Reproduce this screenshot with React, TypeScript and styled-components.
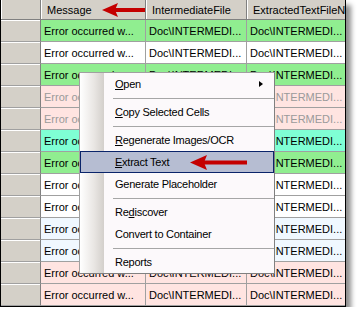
import React from "react";
import styled, { createGlobalStyle } from "styled-components";

const GlobalStyle = createGlobalStyle`
  html, body {
    margin: 0;
    padding: 0;
    background: #fff;
  }
  body {
    font-family: "Liberation Sans", Arial, sans-serif;
    font-size: 11px;
    color: #000;
  }
`;

const Frame = styled.div`
  position: relative;
  width: 344px;
  border-left: 1px solid #000;
  border-right: 1px solid #000;
  border-bottom: 1px solid #000;
  box-shadow: 5px 5px 5px rgba(0, 0, 0, 0.45);
  background: #fff;
`;

const Grid = styled.div`
  display: grid;
  grid-template-columns: 40px 105px 101px 98px;
  grid-template-rows: 20px;
  grid-auto-rows: 22px;
`;

const HeaderCell = styled.div<{ $last?: boolean }>`
  box-sizing: border-box;
  background: #d4d0c8;
  border-right: ${(p) => (p.$last ? "none" : "1px solid #808080")};
  border-bottom: 1px solid #808080;
  box-shadow: inset 1px 0 0 #fff;
  padding-left: 6px;
  display: flex;
  align-items: center;
  white-space: nowrap;
  overflow: hidden;
`;

const RowHeader = styled.div`
  box-sizing: border-box;
  background: #d4d0c8;
  border-right: 1px solid #808080;
  border-bottom: 1px solid #a0a0a0;
  box-shadow: inset 0 1px 0 #fff;
`;

const Cell = styled.div<{ $bg: string; $dim?: boolean; $last?: boolean }>`
  box-sizing: border-box;
  background: ${(p) => p.$bg};
  color: ${(p) => (p.$dim ? "#9a9a9a" : "#000")};
  border-right: ${(p) => (p.$last ? "none" : "1px solid #a0a0a0")};
  border-bottom: 1px solid #a0a0a0;
  padding-left: 3px;
  display: flex;
  align-items: center;
  white-space: nowrap;
  overflow: hidden;
`;

const Menu = styled.div`
  position: absolute;
  left: 78px;
  top: 72px;
  width: 194px;
  border: 1px solid #a0a0a0;
  border-right-color: #808080;
  border-bottom-color: #808080;
  letter-spacing: -0.25px;
  background: linear-gradient(to right, #ffffff 0, #e9e6e3 14px, #d3cfcb 24px, #fcf9fb 24px);
`;

const MenuItem = styled.div<{ $active?: boolean }>`
  position: relative;
  height: 22px;
  padding-left: 35px;
  display: flex;
  align-items: center;
  white-space: nowrap;
  background: ${(p) => (p.$active ? "#b6bdd2" : "transparent")};
  box-shadow: ${(p) => (p.$active ? "inset 0 0 0 1px #0a246a" : "none")};
`;

const Separator = styled.div`
  height: 6px;
  display: flex;
  align-items: center;
  padding-left: 33px;
  &::after {
    content: "";
    flex: 1;
    height: 1px;
    background: #a6a6a6;
  }
`;

const SubArrow = styled.span`
  position: absolute;
  right: 11px;
  top: 8px;
  width: 0;
  height: 0;
  border-left: 4px solid #000;
  border-top: 3.5px solid transparent;
  border-bottom: 3.5px solid transparent;
`;

const Pointer = styled.svg<{ $left: number; $top: number }>`
  position: absolute;
  left: ${(p) => p.$left}px;
  top: ${(p) => p.$top}px;
  pointer-events: none;
`;

type Row = { bg: string; dim?: boolean };

const rows: Row[] = [
  { bg: "#90ee90" },
  { bg: "#ffffff" },
  { bg: "#90ee90" },
  { bg: "#ffe4e1", dim: true },
  { bg: "#ffe4e1", dim: true },
  { bg: "#7fffd4" },
  { bg: "#90ee90" },
  { bg: "#ffffff" },
  { bg: "#ffffff" },
  { bg: "#f0f8ff" },
  { bg: "#f0f8ff" },
  { bg: "#ffe4e1" },
  { bg: "#ffe4e1" },
];

function RedArrow({ left, top, length, head }: { left: number; top: number; length: number; head: number }) {
  const h = head;
  return (
    <Pointer $left={left} $top={top} width={length} height={h} viewBox={`0 0 ${length} ${h}`}>
      <polygon points={`0,${h / 2} ${h + 2},0 ${h - 1},${h / 2} ${h + 2},${h}`} fill="#c40000" />
      <rect x={h - 2} y={h / 2 - 2} width={length - h + 2} height={4} fill="#c40000" />
    </Pointer>
  );
}

export default function App() {
  return (
    <>
      <GlobalStyle />
      <Frame>
        <Grid>
          <HeaderCell />
          <HeaderCell>Message</HeaderCell>
          <HeaderCell>IntermediateFile</HeaderCell>
          <HeaderCell $last>ExtractedTextFileName</HeaderCell>
          {rows.map((r, i) => (
            <React.Fragment key={i}>
              <RowHeader />
              <Cell $bg={r.bg} $dim={r.dim}>Error occurred w...</Cell>
              <Cell $bg={r.bg} $dim={r.dim}>Doc\INTERMEDI...</Cell>
              <Cell $bg={r.bg} $dim={r.dim} $last>Doc\INTERMEDI...</Cell>
            </React.Fragment>
          ))}
        </Grid>

        <RedArrow left={101} top={3} length={43} head={14} />

        <Menu>
          <MenuItem>
            <span><u>O</u>pen</span>
            <SubArrow />
          </MenuItem>
          <Separator />
          <MenuItem><span><u>C</u>opy Selected Cells</span></MenuItem>
          <Separator />
          <MenuItem><span><u>R</u>egenerate Images/OCR</span></MenuItem>
          <MenuItem $active><span><u>E</u>xtract Text</span></MenuItem>
          <MenuItem>Generate Placeholder</MenuItem>
          <Separator />
          <MenuItem><span>Re<u>d</u>iscover</span></MenuItem>
          <MenuItem>Convert to Container</MenuItem>
          <Separator />
          <MenuItem>Reports</MenuItem>
        </Menu>

        <RedArrow left={189} top={155} length={57} head={15} />
      </Frame>
    </>
  );
}
